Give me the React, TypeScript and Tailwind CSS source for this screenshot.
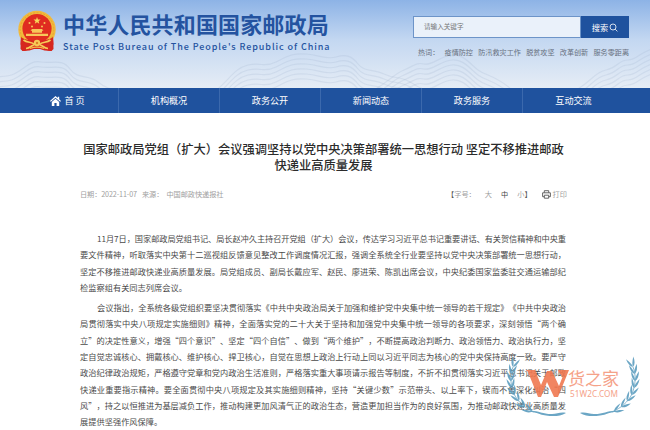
import React from "react";

const nav = ["机构概况", "政务公开", "新闻动态", "政务服务", "互动交流"];
const hot = ["疫情防控", "防汛救灾工作", "脱贫攻坚", "改革创新", "服务零距离"];

const first = [
  "11月7日，国家邮政局党组书记、局长赵冲久主持召开党组（扩大）会议，传达学习习近平总书记重要讲话、有关贺信精神和中央重",
  "要文件精神，听取落实中央第十二巡视组反馈意见整改工作调度情况汇报，强调全系统全行业要坚持以党中央决策部署统一思想行动，",
  "坚定不移推进邮政快递业高质量发展。局党组成员、副局长戴应军、赵民、廖进荣、陈凯出席会议，中央纪委国家监委驻交通运输部纪",
  "检监察组有关同志列席会议。",
];
const second = [
  "会议指出，全系统各级党组织要坚决贯彻落实《中共中央政治局关于加强和维护党中央集中统一领导的若干规定》《中共中央政治",
  "局贯彻落实中央八项规定实施细则》精神，全面落实党的二十大关于坚持和加强党中央集中统一领导的各项要求，深刻领悟“两个确",
  "立”的决定性意义，增强“四个意识”、坚定“四个自信”、做到“两个维护”，不断提高政治判断力、政治领悟力、政治执行力，坚",
  "定自觉忠诚核心、拥戴核心、维护核心、捍卫核心，自觉在思想上政治上行动上同以习近平同志为核心的党中央保持高度一致。要严守",
  "政治纪律政治规矩，严格遵守党章和党内政治生活准则，严格落实重大事项请示报告等制度，不折不扣贯彻落实习近平总书记关于邮政",
  "快递业重要指示精神。要全面贯彻中央八项规定及其实施细则精神，坚持“关键少数”示范带头、以上率下，锲而不舍深化纠治“四",
  "风”，持之以恒推进为基层减负工作，推动构建更加风清气正的政治生态，营造更加担当作为的良好氛围，为推动邮政快递业高质量发",
  "展提供坚强作风保障。",
];

function Paragraph({ lines }: { lines: string[] }) {
  return (
    <div>
      {lines.map((line, i) => (
        <p
          key={i}
          className={
            "h-[16.35px] whitespace-nowrap leading-[16.35px] " +
            (i === 0 ? "pl-[17px] tracking-[-0.06px] " : "") +
            (i < lines.length - 1 ? "[text-align-last:justify]" : "tracking-[0.04px]")
          }
        >
          {line}
        </p>
      ))}
    </div>
  );
}

function Emblem() {
  return (
    <svg className="h-[43px] w-[40px] shrink-0" viewBox="0 0 40 43">
      <path d="M4 26 3.5 39l2 2 7-.5L20 38l7.5 2.5 7 .5 2-2L36 26z" fill="#d6281f" />
      <circle cx="20" cy="19.5" r="18.7" fill="#f2b93c" />
      <circle cx="20" cy="19.5" r="16.8" fill="none" stroke="#e0a030" strokeWidth=".8" strokeDasharray="2 1.4" />
      <circle cx="20" cy="18.5" r="14.6" fill="#e02c20" />
      <path d="m20 7 1 2.4 2.6.1-2 1.7.7 2.5-2.3-1.4-2.2 1.4.7-2.5-2-1.7 2.6-.1z" fill="#f7d65a" />
      <g fill="#f7c65a">
        <circle cx="12.5" cy="13" r="1" />
        <circle cx="15" cy="16.5" r="1" />
        <circle cx="25" cy="16.5" r="1" />
        <circle cx="27.5" cy="13" r="1" />
        <path d="M15 19h10l1.5 1.8h-13zM15 20.8h10v2H15zM9 23.8h22V26H9z" />
      </g>
      <path d="M4 27c5 4 9 2 13 4h6c4-2 8 0 13-4l.5 7-2 7c-5 0-6-2-8-2h-13c-2 0-3 2-8 2l-2-7z" fill="#d6281f" />
      <path d="M6.500 30c4 3.500 8 1 11 4.500M33.500 30c-4 3.500-8 1-11 4.500M9 38.500c5-.5 6-4.500 11-4.500s6 4 11 4.500" fill="none" stroke="#f6cc58" strokeWidth="1.7" />
      <circle cx="20" cy="33" r="3.2" fill="#f6cc58" />
      <circle cx="20" cy="33" r="1.2" fill="#df7d28" />
      <path d="M13 38.5c4-1.5 10-1.5 14 0" stroke="#f2bf49" strokeWidth="1.2" fill="none" />
    </svg>
  );
}

const ridge = "M-30 84C-14 72 2 80 14 74S30 60 41 62S62 58 70 69S88 74 98 82S112 88 124 92";
const ridgeWide = "M214 92C228 82 234 68 248 65S264 68 276 62S292 53 306 54S326 60 336 57S352 56 358 64S374 69 384 74S400 76 410 82S420 88 432 92";
const ridgeRight = "M374 90C388 82 394 74 404 70S416 62 424 64S440 56 452 55S470 64 478 70S492 74 510 88";
const ridgeEdge = "M572 92C590 84 594 72 606 70S618 60 628 60S640 50 662 46";

function Mountains() {
  return (
    <svg className="absolute inset-0 h-[88px] w-[650px]" viewBox="0 0 650 88" fill="none" stroke="#9fb2cf" strokeOpacity=".22" strokeWidth="1.2">
      {[0, 5, 10, 15, 20, 25].map((y) => (
        <g key={y} transform={`translate(0 ${y})`}>
          <path d={ridge} />
          <path d={ridgeWide} />
          <path d={ridgeRight} />
          <path d={ridgeEdge} />
        </g>
      ))}
    </svg>
  );
}

// Each leaf pair: stem position and the direction of growth in degrees.
const leaves = [
  [13, 15, -68], [11.5, 22, -78], [11, 29, -88], [12, 36, -98],
  [14.5, 43, -110], [19, 49, -122], [25, 55, -136], [32, 59.5, -148],
];

function Laurel() {
  return (
    <g fill="#5b9dbf">
      <path d="M13 15C10 22 10 32 14 42c4 8 11 14 20 18" stroke="#5b9dbf" strokeWidth=".8" fill="none" />
      {leaves.map(([x, y, a], i) => (
        <g key={i} transform={`translate(${x} ${y})`}>
          <path transform={`rotate(${a - 24})`} d="M0 0C2.5-2 6-1.8 10.5 0 6 1 2.5 1.1 0 0z" />
          <path transform={`rotate(${a + 20})`} d="M0 0C2.5-1.1 6-1 10.5 0 6 1.7 2.5 1.8 0 0z" />
        </g>
      ))}
      <path d="M26 60c8-4 16 2.500 26 2 5 0 9-2.500 14-1-6 3.500-13 3.500-20 2.500-7-1-13-5-20-3.500z" />
    </g>
  );
}

function Watermark() {
  return (
    <svg className="absolute left-[500px] top-[352px] h-[70px] w-[150px] opacity-90" viewBox="0 0 150 70">
      <g><Laurel /></g>
      <g transform="translate(146 0) scale(-1 1)"><Laurel /></g>
      <path d="M26 18h9l6 15 6-14h5l7 15 3.500-9L58 19v-1h11L58 45h-4l-7-15-6 15h-3L28 20z" fill="#f07850" />
      <text x="68" y="33" fontSize="17" textLength="51" fill="#f5987c" fontFamily="Noto Sans CJK SC, sans-serif">货之家</text>
      <text x="70" y="44.5" fontSize="8.2" textLength="48" fill="#f5987c" fontFamily="Noto Sans, sans-serif">51W2C.COM</text>
    </svg>
  );
}

export default function App() {
  return (
    <div className="relative h-[430px] w-[650px] overflow-hidden bg-white font-['Noto_Sans_CJK_SC','Noto_Sans',sans-serif] [text-spacing-trim:space-all]">
      <header className="relative h-[88px] bg-linear-to-b from-[#8db3e6] via-[#c3d7f1] via-45% to-[#e6edf5]">
        <Mountains />
        <div className="relative flex h-full items-start justify-between pl-[17px] pr-[21px]">
          <div className="flex pt-[10px]">
            <Emblem />
            <div className="ml-[6px] whitespace-nowrap text-[#2453a0]">
              <h1 className="h-[27px] text-[22px] font-bold leading-[27px] tracking-[0.15px]">中华人民共和国国家邮政局</h1>
              <p className="mt-[3px] h-[14px] w-[267px] text-[9px] font-medium leading-[14px] tracking-[0.92px]">
                State Post Bureau of The People's Republic of China
              </p>
            </div>
          </div>
          <div className="w-[216px] pt-[16px]">
            <div className="flex h-[22px]">
              <div className="flex flex-1 items-center border border-[#6d94c8] bg-[#eaf1fa] pl-[10px] text-[6.6px] text-[#777]">请输入关键字</div>
              <div className="flex w-[48px] items-center justify-center gap-[1px] bg-[#1f529e] text-[8.2px] text-white">
                搜索
                <svg className="size-[9px]" viewBox="0 0 9 9" fill="none" stroke="white" strokeWidth=".8">
                  <circle cx="4" cy="4" r="3" />
                  <path d="m6.2 6.2 2.2 2.2" />
                </svg>
              </div>
            </div>
            <div className="mt-[8px] flex h-[12px] items-center justify-between whitespace-nowrap pl-[5px] text-[7.1px] leading-[12px] text-[#67707e]">
              <span>热词：</span>
              {hot.map((h) => <span key={h}>{h}</span>)}
            </div>
          </div>
        </div>
      </header>
      <nav className="flex h-[25px] bg-[#1f529e] pl-[17px] text-[9.1px] leading-[25px] text-white">
        <a className="flex w-[102px] items-center justify-center gap-[3px] border-r border-[#3b69ad]">
          <svg className="h-[10px] w-[11px]" viewBox="0 0 11 10" fill="white">
            <path d="M5.5 0 0 5l.8.8L5.5 1.7l4.7 4.1.8-.8-1.8-1.7V.8H7.8v1.3z" />
            <path d="M1.8 6 5.5 2.8 9.2 6v4H6.6V7H4.4v3H1.8z" />
          </svg>
          <span>首 页</span>
        </a>
        {nav.map((n, i) => (
          <a key={n} className={"w-[101px] text-center " + (i < 4 ? "border-r border-[#3b69ad]" : "")}>{n}</a>
        ))}
      </nav>
      <main className="px-[80px] pt-[28px]">
        <h2 className="whitespace-nowrap pr-[3px] text-center text-[12.25px] font-medium leading-[16px] text-[#2b2b2b]">
          国家邮政局党组（扩大）会议强调坚持以党中央决策部署统一思想行动 坚定不移推进邮政
          <br />
          快递业高质量发展
        </h2>
        <div className="mt-[15px] flex h-[12px] items-center justify-between whitespace-nowrap pr-[3px] text-[7.2px] leading-[12px] text-[#a0a0a0]">
          <div className="flex">
            <span className="tracking-[-0.12px]">日期：2022-11-07</span>
            <span className="ml-[5px]">来源：</span>
            <span className="ml-[3px] tracking-[-0.08px]">中国邮政快递报社</span>
          </div>
          <div className="flex items-center">
            <span><b className="font-normal text-[#555]">【</b>字号：</span>
            <span className="ml-[9px]">大</span>
            <span className="ml-[9px] text-[#444]">中</span>
            <span className="ml-[9px]">小<b className="font-normal text-[#555]">】</b></span>
            <svg className="ml-[10px] mr-[2px] size-[9px]" viewBox="0 0 9 9" fill="none" stroke="#555" strokeWidth=".9">
              <path d="M2.3 2.7V.7h4.4v2M2.3 6.7H.6V2.8h7.8v3.9H6.7M2.3 5.2h4.4v3H2.3z" />
            </svg>
            <span>打印</span>
          </div>
        </div>
        <article className="mt-[30px] flex w-[486px] flex-col gap-[3.6px] text-[8.2px] text-[#4a4a4a]">
          <Paragraph lines={first} />
          <Paragraph lines={second} />
        </article>
      </main>
      <Watermark />
    </div>
  );
}
